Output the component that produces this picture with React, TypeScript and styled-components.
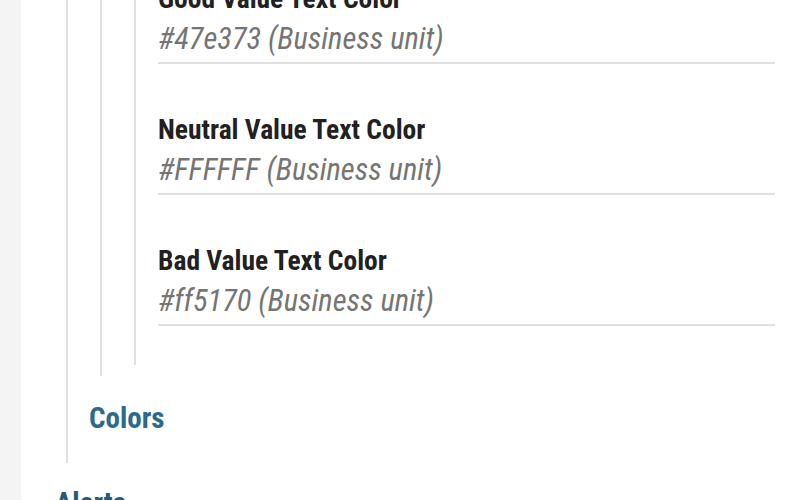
import React from "react";
import styled, { createGlobalStyle } from "styled-components";

const Global = createGlobalStyle`
  html, body {
    margin: 0;
    padding: 0;
    height: 500px;
    overflow: hidden;
    background: #ffffff;
  }
  body {
    font-family: "Roboto Condensed", "Liberation Sans Narrow", "DejaVu Sans Condensed", Roboto, sans-serif;
  }
`;

const Page = styled.div`
  display: flex;
  height: 500px;
`;

const Sidebar = styled.div`
  width: 21px;
  flex: none;
  background: #f4f4f4;
`;

const Main = styled.div`
  flex: 1;
  padding: 0 25px 0 34px;
  margin-top: -17px;
`;

const Heading = styled.h2<{ $level: number }>`
  margin: ${(p) => (p.$level === 1 ? "23px" : "25px")} 0 0 0;
  font-size: 29px;
  line-height: 34px;
  font-weight: 700;
  color: ${(p) => (p.$level === 1 ? "#245a7a" : "#2b6a8c")};
`;

const Group = styled.div<{ $pb: number; $pl?: number }>`
  margin-left: 11px;
  border-left: 2px solid #e0e0e0;
  padding-left: ${(p) => p.$pl ?? 21}px;
  padding-bottom: ${(p) => p.$pb}px;
`;

const Field = styled.div`
  & + & {
    margin-top: 50px;
  }
`;

const Label = styled.div`
  font-size: 27.5px;
  line-height: 32px;
  font-weight: 700;
  color: #212121;
`;

const Value = styled.div`
  padding: 6px 0 5px;
  font-size: 30.5px;
  line-height: 36px;
  font-style: italic;
  font-weight: 400;
  color: #757575;
  border-bottom: 2px solid #e0e0e0;
`;

const fields = [
  { label: "Good Value Text Color", value: "#47e373 (Business unit)" },
  { label: "Neutral Value Text Color", value: "#FFFFFF (Business unit)" },
  { label: "Bad Value Text Color", value: "#ff5170 (Business unit)" },
];

export default function App() {
  return (
    <>
      <Global />
      <Page>
        <Sidebar />
        <Main>
          <Group $pb={28}>
            <Group $pb={11}>
              <Group $pb={39} $pl={22}>
                {fields.map((f) => (
                  <Field key={f.label}>
                    <Label>{f.label}</Label>
                    <Value>{f.value}</Value>
                  </Field>
                ))}
              </Group>
            </Group>
            <Heading $level={2}>Colors</Heading>
          </Group>
          <Heading $level={1}>Alerts</Heading>
        </Main>
      </Page>
    </>
  );
}
